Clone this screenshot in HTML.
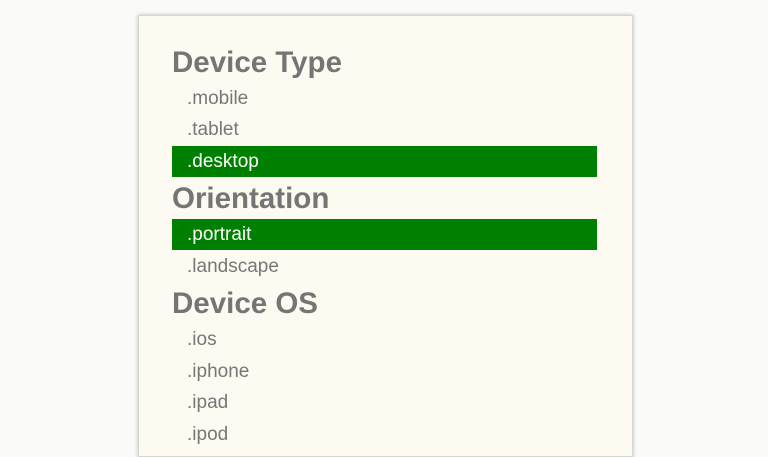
<!DOCTYPE html>
<html><head><style>
html,body{margin:0;padding:0;width:768px;height:446px;overflow:hidden;background:#fafaf8;font-family:"Liberation Sans",Arial,sans-serif;}
.panel{position:absolute;left:138px;top:15px;width:493px;height:440px;background:#fcfaf1;border:1px solid #d6d6d0;box-shadow:0 0 4px rgba(0,0,0,.25);}
.h{position:absolute;left:172px;font-size:29.5px;font-weight:bold;color:#757575;line-height:32px;}
.i{position:absolute;left:172px;width:410px;padding-left:15px;height:31px;line-height:31px;font-size:19px;color:#777;}
.g{background:#008000;color:#fff;}
</style></head><body>
<div class="panel"></div>
<div class="h" style="top:47px">Device Type</div>
<div class="i" style="top:83px">.mobile</div>
<div class="i" style="top:114px">.tablet</div>
<div class="i g" style="top:146px">.desktop</div>
<div class="h" style="top:183px">Orientation</div>
<div class="i g" style="top:219px">.portrait</div>
<div class="i" style="top:251px">.landscape</div>
<div class="h" style="top:288px">Device OS</div>
<div class="i" style="top:324px">.ios</div>
<div class="i" style="top:356px">.iphone</div>
<div class="i" style="top:387px">.ipad</div>
<div class="i" style="top:419px">.ipod</div>
</body></html>
